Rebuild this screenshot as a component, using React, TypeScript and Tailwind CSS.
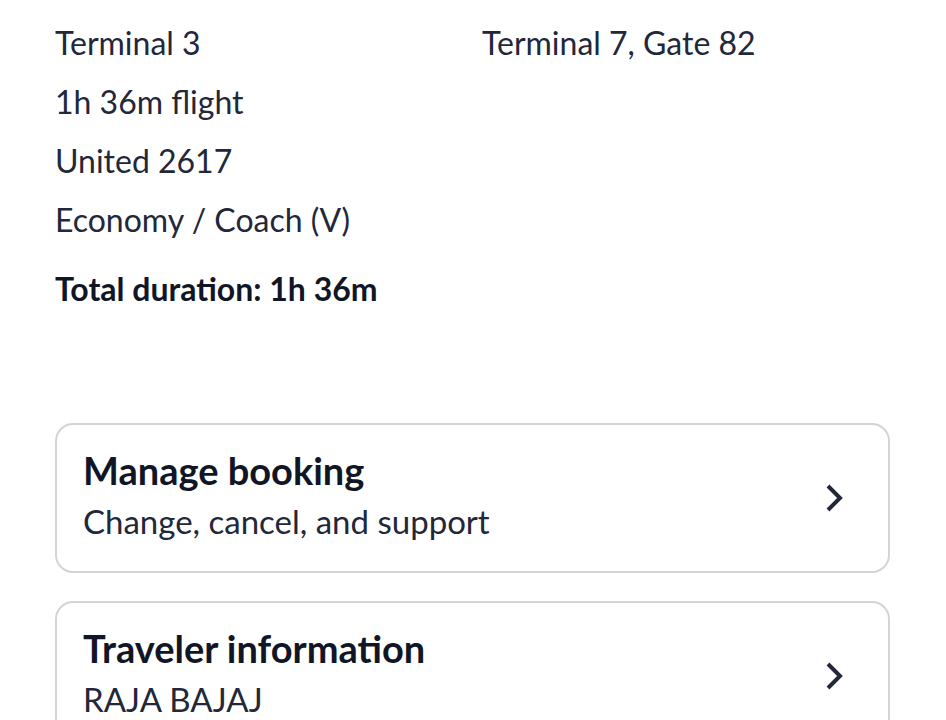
import React from "react";

const Chevron = () => (
  <svg width="22" height="30" viewBox="0 0 22 30" fill="none">
    <path d="M4 3 L16 15 L4 27" stroke="#22273a" strokeWidth="4" strokeLinejoin="miter" />
  </svg>
);

const cards = [
  { title: "Manage booking", sub: "Change, cancel, and support" },
  { title: "Traveler information", sub: "RAJA BAJAJ" },
];

export default function App() {
  return (
    <div className="w-[946px] h-[720px] overflow-hidden bg-white text-[#22273a] font-['Lato',sans-serif]">
      {/* flight leg details */}
      <div className="px-[55px] pt-[13px]">
        <div className="grid grid-cols-[427px_1fr] text-[32px] leading-[59px]">
          <div>
            <div>Terminal 3</div>
            <div>1h 36m flight</div>
            <div>United 2617</div>
            <div>Economy / Coach (V)</div>
          </div>
          <div>
            <div>Terminal 7, Gate 82</div>
          </div>
        </div>
        <div className="mt-[10px] text-[32px] font-bold leading-[59px] text-[#111627]">
          Total duration: 1h 36m
        </div>
      </div>

      {/* action cards */}
      <div className="ml-[55px] mr-[56px] mt-[105px] flex flex-col gap-[28px]">
        {cards.map((c) => (
          <div
            key={c.title}
            className="h-[150px] rounded-[18px] border-2 border-[#d4d4d4] pl-[26px] pr-[42px] flex items-center justify-between"
          >
            <div className="-mt-[6px]">
              <div className="text-[38px] font-bold leading-[48px] text-[#111627]">{c.title}</div>
              <div className="mt-[3px] text-[33px] leading-[48px]">{c.sub}</div>
            </div>
            <Chevron />
          </div>
        ))}
      </div>
    </div>
  );
}
